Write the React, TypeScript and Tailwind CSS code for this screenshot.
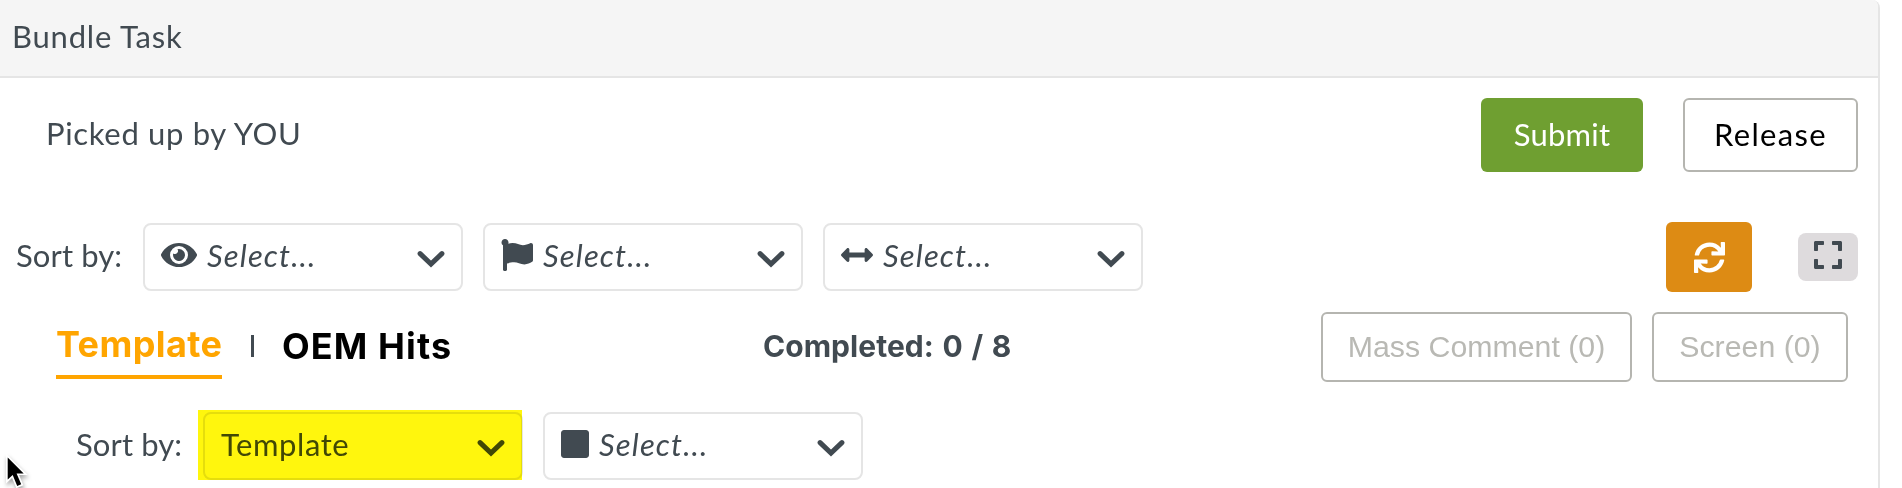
import type { ReactNode } from "react";
import { FaArrowsAltH, FaExpand, FaEye, FaFlag, FaSquare, FaSync } from "react-icons/fa";

function Chevron() {
  return (
    <svg width="28" height="18" viewBox="0 0 28 18" fill="none" className="mt-1 ml-auto shrink-0">
      <path d="M3.1 3.6 L14 14.1 L24.9 3.6" stroke="currentColor" strokeWidth="5" strokeLinecap="round" />
    </svg>
  );
}

function Select({ icon, children }: { icon?: ReactNode; children: ReactNode }) {
  return (
    <div className="flex h-[68px] w-80 shrink-0 items-center rounded-lg border-2 border-[#e5e5e5] pr-4 pl-4">
      {icon && <span className="mr-2.5 mb-1 shrink-0">{icon}</span>}
      {children}
      <Chevron />
    </div>
  );
}

function Placeholder() {
  return <span className="mb-1 tracking-[1.15px] italic">Select...</span>;
}

function Cursor() {
  return (
    <svg width="34" height="44" viewBox="0 0 34 44" className="absolute top-[452px] left-0 overflow-visible drop-shadow-[1px_3px_2px_rgba(0,0,0,0.35)]">
      <path
        d="M7.7 5.5 V27.6 L12.7 22.9 L17.2 34 L21.2 32.3 L16.6 21.4 H23.7 Z"
        fill="#000"
        stroke="#fff"
        strokeWidth="3.4"
        paintOrder="stroke"
      />
    </svg>
  );
}

export default function App() {
  return (
    <div className="relative h-[488px] w-[1902px] overflow-hidden bg-white font-['Lato',sans-serif] text-[31px] leading-9 text-[#414a51]">
      <div className="h-full w-[1880px] rounded-tr-lg border-r-2 border-[#e5e5e5]">
        <header className="flex h-[78px] items-center rounded-tr-md border-b-2 border-[#e5e5e5] bg-[#f5f5f5] pb-1 pl-3 tracking-[0.8px]">
          Bundle Task
        </header>

        <div className="mt-5 flex h-[74px] items-center pr-5 pl-[46px]">
          <span className="mb-1 tracking-[0.68px]">Picked up by YOU</span>
          <button className="ml-auto h-[74px] w-[162px] rounded-md bg-[#6f9f31] pb-0.5 tracking-[0.2px] text-white">
            Submit
          </button>
          <button className="ml-10 h-[74px] w-[175px] rounded-md border-2 border-[#b5b5b0] pb-0.5 tracking-[1.3px] text-black">
            Release
          </button>
        </div>

        <div className="mt-[50px] flex h-[70px] items-center pr-5 pl-4">
          <span className="mb-1 w-[127px] tracking-[0.1px]">Sort by:</span>
          <div className="flex gap-5">
            <Select icon={<FaEye className="h-8 w-9" />}>
              <Placeholder />
            </Select>
            <Select icon={<FaFlag className="size-8" />}>
              <Placeholder />
            </Select>
            <Select icon={<FaArrowsAltH className="size-8" />}>
              <Placeholder />
            </Select>
          </div>
          <button className="ml-auto flex h-[70px] w-[86px] items-center justify-center rounded-md bg-[#dd8b14] text-white">
            <FaSync className="size-[31px]" />
          </button>
          <button className="ml-[46px] flex h-12 w-[60px] items-center justify-center rounded-lg bg-[#dedbdd] pb-1">
            <FaExpand className="h-8 w-7" />
          </button>
        </div>

        <div className="mt-5 flex h-[70px] items-center pr-[30px] pl-14">
          <div className="flex h-[67px] w-[166px] items-center self-start border-b-4 border-[#ffa500] font-['Inter',sans-serif] text-[36px] font-bold tracking-[0.4px] text-[#ffa500]">
            Template
          </div>
          <div className="mb-0.5 ml-[29px] h-[22px] w-[3px] bg-[#414a51]" />
          <div className="mb-0.5 ml-7 w-[481px] font-['Inter',sans-serif] text-[36px] font-bold tracking-[1.1px] text-black">
            OEM Hits
          </div>
          <div className="mb-0.5 font-['Inter',sans-serif] text-[30px] font-bold tracking-[0.05px] [word-spacing:1.5px]">
            Completed: 0 / 8
          </div>
          <button className="ml-auto h-[70px] w-[311px] rounded-md border-2 border-[#b5b5b0] pb-px font-['Liberation_Sans',sans-serif] text-[30.3px] text-[#b9b9b4]">
            Mass Comment (0)
          </button>
          <button className="ml-5 h-[70px] w-[196px] rounded-md border-2 border-[#b5b5b0] pb-px font-['Liberation_Sans',sans-serif] text-[30.3px] text-[#b9b9b4]">
            Screen (0)
          </button>
        </div>

        <div className="mt-[30px] flex h-[68px] items-center pl-[76px]">
          <span className="mb-1 w-[127px] tracking-[0.1px]">Sort by:</span>
          <div className="relative mr-5">
            <Select>
              <span className="mb-1 tracking-[0.56px]">Template</span>
            </Select>
            <div className="absolute -top-0.5 -left-[5px] h-[70px] w-[324px] bg-[#fff60d] mix-blend-multiply" />
          </div>
          <Select icon={<FaSquare className="h-8 w-7" />}>
            <Placeholder />
          </Select>
        </div>
      </div>
      <Cursor />
    </div>
  );
}
